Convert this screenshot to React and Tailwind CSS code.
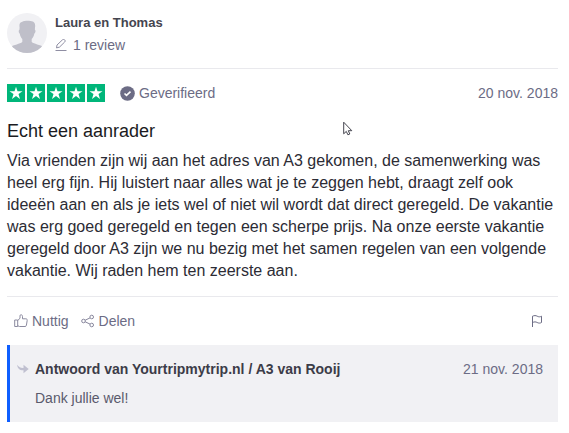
const stars = [1, 2, 3, 4, 5]

const Avatar = () => {
  return (
    <svg className="size-10 shrink-0 rounded-full" viewBox="0 0 40 40" aria-hidden="true">
      <rect width="40" height="40" fill="#f1f1f4" />
      <path
        fill="#bfbfc9"
        d="M12.600 14.500c-.6-3.800.5-5.400 2.400-5.600C16.500 8 19 7.700 22 7.800c5 .2 6.800 2.400 6 6.700l-.1 2.300c1 .5.700 2.900-.6 3.900-.5 2.500-1.300 4-2.600 5.200v3.200c2.300 2.200 8.300 2.400 12.300 5.200V41H3v-6.700c4-2.800 10-3 12.300-5.200v-3.200c-1.300-1.200-2-2.700-2.500-5.200-1.200-1-1.500-3.400-.4-3.900z"
      />
    </svg>
  )
}

const PencilIcon = () => {
  return (
    <svg className="size-3" viewBox="0 0 12 12" fill="none" stroke="#8f8ea3" aria-hidden="true">
      <path d="M1.500 8.900l.5-2.900L7.400.9c.7-.6 1.700-.5 2.300 0s.6 1.500 0 2.100L4.500 8.100z" />
      <path d="M.5 11.500h11" />
    </svg>
  )
}

const Star = () => {
  return (
    <svg className="size-[18px]" viewBox="0 0 18 18" aria-hidden="true">
      <rect width="18" height="18" fill="#00b67a" />
      <path
        fill="#fff"
        d="M9 2.700l1.500 4.500h5l-4 2.900 1.500 4.900L9 12l-4 3 1.500-4.900-4-2.900h5z"
      />
    </svg>
  )
}

const VerifiedIcon = () => {
  return (
    <svg className="size-[15px]" viewBox="0 0 15 15" aria-hidden="true">
      <circle cx="7.500" cy="7.500" r="7.300" fill="#6c6c85" />
      <path d="M4.500 7.500l2 1.900 4-3.800" fill="none" stroke="#fff" strokeWidth="1.600" />
    </svg>
  )
}

const ThumbIcon = () => {
  return (
    <svg
      className="size-[14px]"
      viewBox="0 0 14 14"
      fill="none"
      stroke="#8b8a9f"
      strokeLinejoin="round"
      aria-hidden="true"
    >
      <path d="M.7 6h3v6.500h-3z" />
      <path d="M3.700 6.500L6 4.300V1.800C6 1 6.500.7 7.200.8c1 .1 1.300.9 1.300 1.700v2.300h3.300c1 0 1.600.7 1.400 1.600l-.8 4.900c-.2.800-.6 1.200-1.400 1.200H5.500l-1.800-.8" />
    </svg>
  )
}

const ShareIcon = () => {
  return (
    <svg className="size-[14px]" viewBox="0 0 14 14" fill="none" stroke="#88879d" aria-hidden="true">
      <circle cx="2.500" cy="7" r="1.800" />
      <circle cx="10.700" cy="3" r="1.800" />
      <circle cx="10.700" cy="11" r="1.800" />
      <path d="M4.200 6.200L9 3.900M4.200 7.800L9 10.100" />
    </svg>
  )
}

const FlagIcon = () => {
  return (
    <svg className="size-3" viewBox="0 0 12 12" fill="none" stroke="#6c6c85" aria-hidden="true">
      <path d="M1.500 12V1.200c1.800-.8 3.300-.8 4.700 0s3 .8 4.300 0v6.300c-1.300.8-2.900.8-4.300 0s-2.900-.8-4.700 0" />
    </svg>
  )
}

const ReplyIcon = () => {
  return (
    <svg className="w-3 h-[10px]" viewBox="0 0 12 10" fill="#c0c0d0" aria-hidden="true">
      <path d="M.2.800c1.200 2.200 3 3.200 6.300 3.100V.700L11.700 5 6.500 9.300V6.300C2.700 6.500.3 4.500.2.800z" />
    </svg>
  )
}

const CursorIcon = () => {
  return (
    <svg className="absolute left-[343px] top-[121px] w-[11px] h-4" viewBox="0 0 11 16" aria-hidden="true">
      <path
        d="M.7 1.200v11.600l2.600-2.400 1.600 3.400 1.900-.8-1.500-3.300h3.500z"
        fill="#fff"
        stroke="#45454f"
      />
    </svg>
  )
}

export default function App() {
  return (
    <article className="relative bg-white pl-[7px] pr-[11px] pt-[13px] pb-3 font-['Liberation_Sans',Arial,sans-serif] text-sm leading-5 text-[#6c6c85]">
      <header className="flex gap-2 border-b border-[#e9e9ed] pb-[15px]">
        <Avatar />
        <div>
          <h2 className="text-[13px] leading-5 font-bold text-[#45454f]">Laura en Thomas</h2>
          <a href="#" className="flex items-center gap-[6px] pt-[2px] -mb-[2px]">
            <PencilIcon />
            1 review
          </a>
        </div>
      </header>

      <div className="flex items-center pt-[14px]">
        <div className="flex gap-[2px]" role="img" aria-label="5 / 5">
          {stars.map((star) => (
            <Star key={star} />
          ))}
        </div>
        <span className="ml-[15px] flex items-center gap-1">
          <VerifiedIcon />
          Geverifieerd
        </span>
        <time className="ml-auto">20 nov. 2018</time>
      </div>

      <h3 className="pt-4 text-lg leading-6 text-[#1b1b21]">Echt een aanrader</h3>
      <p className="pt-[7px] text-base leading-[22px] text-[#2c2c35]">
        Via vrienden zijn wij aan het adres van A3 gekomen, de samenwerking was
        heel erg fijn. Hij luistert naar alles wat je te zeggen hebt, draagt zelf
        ook ideeën aan en als je iets wel of niet wil wordt dat direct geregeld.
        De vakantie was erg goed geregeld en tegen een scherpe prijs. Na onze
        eerste vakantie geregeld door A3 zijn we nu bezig met het samen regelen
        van een volgende vakantie. Wij raden hem ten zeerste aan.
      </p>

      <footer className="mt-[14px] flex items-center border-t border-[#e9e9ed] px-[7px] py-[14px]">
        <button type="button" className="flex items-center gap-1">
          <ThumbIcon />
          Nuttig
        </button>
        <button type="button" className="ml-3 flex items-center gap-1">
          <ShareIcon />
          Delen
        </button>
        <button type="button" className="ml-auto mr-2" aria-label="Melden">
          <FlagIcon />
        </button>
      </footer>

      <section className="border-l-[3px] border-[#0f5fff] bg-[#f1f1f4] pl-[7px] pr-[15px] py-[14px]">
        <div className="flex items-center">
          <ReplyIcon />
          <h4 className="ml-[6px] font-bold text-[#3c3c48]">
            Antwoord van Yourtripmytrip.nl / A3 van Rooij
          </h4>
          <time className="ml-auto">21 nov. 2018</time>
        </div>
        <p className="pl-[18px] pt-[9px] text-[#5a5a6c]">Dank jullie wel!</p>
      </section>

      <CursorIcon />
    </article>
  )
}
